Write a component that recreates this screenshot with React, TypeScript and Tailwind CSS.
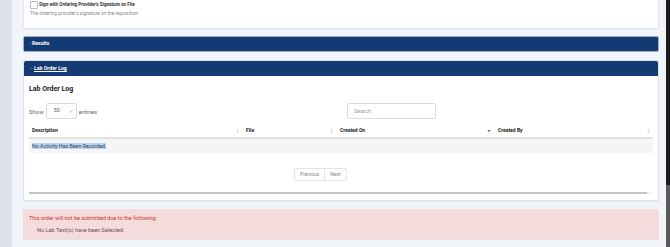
import React from "react";

function SortIcon({ active }: { active?: boolean }) {
  if (active) {
    return (
      <svg viewBox="0 0 6 6" className="w-[4px] h-[4px]">
        <path d="M0.5 1.5 L5.5 1.5 L3 5 Z" fill="#5b6fd6" />
      </svg>
    );
  }
  return (
    <svg viewBox="0 0 4 8" className="w-[3px] h-[6px]">
      <path d="M0.3 3.2 L3.7 3.2 L2 0.6 Z" fill="#d4d4d4" />
      <path d="M0.3 4.8 L3.7 4.8 L2 7.4 Z" fill="#d4d4d4" />
    </svg>
  );
}

export default function App() {
  const cols = [
    { label: "Description", active: false },
    { label: "File", active: false },
    { label: "Created On", active: true },
    { label: "Created By", active: false },
  ];

  return (
    <div
      className="w-[670px] h-[247px] overflow-hidden flex bg-[#f1f4f9]"
      style={{ fontFamily: "Roboto, 'Liberation Sans', sans-serif" }}
    >
      {/* sidebar edge */}
      <div className="w-[12px] shrink-0 bg-[#dde1ea]" />

      <div className="flex-1 pl-[11px] pr-[7px] flex flex-col">
        {/* signature card */}
        <div className="h-[29px] shrink-0 bg-white border-x border-b border-[#e1e5ec] rounded-b-[2px] shadow-[0_1px_1px_rgba(0,0,0,0.04)] pl-[6px] pt-[1px]">
          <div className="flex items-center gap-[1px] h-[8px]">
            <div className="w-[8px] h-[8px] border border-[#b9bcc2] rounded-[1px] bg-white" />
            <span className="text-[4.6px] font-bold text-[#333] leading-none">
              Sign with Ordering Provider's Signature on File
            </span>
          </div>
          <div className="mt-[3px] text-[4.8px] text-[#8a8a8a] leading-none">
            The ordering provider's signature on the requisition
          </div>
        </div>

        {/* Results bar */}
        <div className="mt-[7px] h-[16px] shrink-0 bg-[#143a73] border border-[#9fb0cb] rounded-[2px] flex items-center pl-[6px]">
          <span className="text-white text-[3px] mr-[1px]">›</span>
          <span className="text-white text-[5.2px] font-bold leading-none">Results</span>
        </div>

        {/* Lab order log card */}
        <div className="mt-[8px] h-[141px] shrink-0 bg-white border border-[#dfe3ea] rounded-[2px] shadow-[0_1px_1px_rgba(0,0,0,0.05)] flex flex-col">
          <div className="h-[15px] shrink-0 bg-[#143a73] flex items-center pl-[6px] rounded-t-[2px]">
            <span className="text-white text-[3px] mr-[1px]">⌄</span>
            <span className="text-white text-[5.2px] font-bold underline leading-none">Lab Order Log</span>
          </div>

          <div className="px-[5px] flex flex-col">
            <div className="mt-[10px] text-[7px] font-bold text-[#222] leading-none">Lab Order Log</div>

            <div className="mt-[10px] grid grid-cols-2">
              <div className="flex items-center gap-[2px] text-[6px] text-[#666]">
                <span>Show</span>
                <div className="w-[31px] h-[16px] border border-[#dcdcdc] rounded-[2px] flex items-center justify-between pl-[7px] pr-[3px]">
                  <span className="text-[5.2px] text-[#555]">50</span>
                  <svg viewBox="0 0 6 4" className="w-[4px] h-[3px]">
                    <path d="M0.5 0.8 L3 3.2 L5.5 0.8" stroke="#888" strokeWidth="0.8" fill="none" />
                  </svg>
                </div>
                <span>entries</span>
              </div>
              <div className="pl-[6px]">
                <div className="w-[89px] h-[16px] border border-[#dcdcdc] rounded-[2px] flex items-center pl-[6px] text-[5.5px] text-[#999]">
                  Search:
                </div>
              </div>
            </div>

            {/* table */}
            <div className="mt-[5px] grid grid-cols-[213px_94px_158px_1fr] h-[15px] border-b-[2px] border-[#e2e2e2] items-center">
              {cols.map((c, i) => (
                <div
                  key={c.label}
                  className={`flex items-center justify-between pr-[3px] ${i === 0 ? "pl-[3px]" : "pl-[4px]"}`}
                >
                  <span className="text-[5px] font-bold text-[#222] leading-none">{c.label}</span>
                  <SortIcon active={c.active} />
                </div>
              ))}
            </div>
            <div className="h-[14px] bg-[#f5f5f5] flex items-center pl-[3px]">
              <span className="text-[5.3px] text-[#444] bg-[#b5d5fb] leading-[6px]">No Activity Has Been Recorded.</span>
            </div>

            <div className="mt-[15px] flex pl-[265px]">
              <div className="flex h-[13px] border border-[#e3e3e3] rounded-[2px] text-[5px] text-[#888]">
                <div className="px-[5px] flex items-center border-r border-[#e3e3e3]">Previous</div>
                <div className="px-[5px] flex items-center">Next</div>
              </div>
            </div>

            <div className="mt-[11px] h-[2px] bg-[#f1f1f1] flex">
              <div className="w-[618px] bg-[#c3c3c3]" />
            </div>
          </div>
        </div>

        {/* alert */}
        <div className="mt-[8px] h-[31px] shrink-0 bg-[#f5dcdc] pl-[6px] pt-[7px]">
          <div className="text-[5.5px] text-[#d4312f] leading-none">
            This order will not be submitted due to the following:
          </div>
          <div className="mt-[6px] pl-[8px] text-[5.6px] text-[#7d4a4a] leading-none">
            No Lab Test(s) have been Selected.
          </div>
        </div>

        {/* bottom buttons (tops) */}
        <div className="mt-[7px] h-[4px] shrink-0 flex">
          <div className="w-[152px] bg-[#f0caca] rounded-t-[1px]" />
          <div className="ml-[10px] w-[150px] bg-[#c7d0dc] rounded-t-[1px]" />
          <div className="ml-auto w-[83px] bg-[#c9cdd4] rounded-t-[1px]" />
        </div>
      </div>

      {/* window scrollbar */}
      <div className="w-[4px] shrink-0 bg-[#1c1c1c] flex flex-col">
        <div className="h-[185px]" />
        <div className="flex-1 bg-[#5a5a5a]" />
      </div>
    </div>
  );
}
